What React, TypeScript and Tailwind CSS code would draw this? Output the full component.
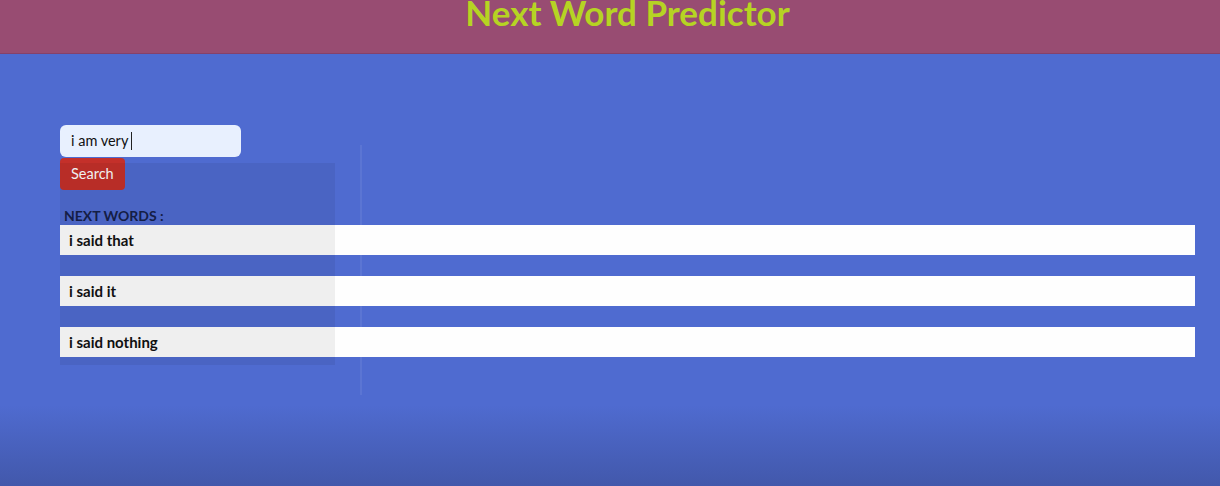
import { useState } from "react";

const predictions = ["i said that", "i said it", "i said nothing"];

export default function App() {
  const [query, setQuery] = useState("i am very");

  return (
    <div
      className="relative min-h-[486px] w-full overflow-hidden bg-[linear-gradient(to_bottom,#4f6bd0_0px,#4f6bd0_405px,#4258ab_486px)]"
      style={{ fontFamily: 'Lato, "Open Sans", sans-serif' }}
    >
      <header className="flex h-[54px] justify-center border-b border-[#85416a] bg-[#984c72] pl-[35px]">
        <h1 className="-mt-[9px] text-[35px] font-bold leading-[42px] text-[#b6d423]">
          Next Word Predictor
        </h1>
      </header>

      <main className="pl-[60px] pr-[25px] pt-[71px]">
        <form
          className="flex flex-col items-start"
          onSubmit={(event) => event.preventDefault()}
        >
          <div className="flex h-[32px] w-[181px] items-center rounded-[6px] bg-[#e8f0fe] px-[11px] text-[14.5px] text-[#111]">
            <input
              value={query}
              onChange={(event) => setQuery(event.target.value)}
              className="w-[58px] bg-transparent outline-none"
            />
            <span className="ml-[2px] h-[18px] w-px bg-[#222]" />
          </div>
          <button
            type="submit"
            className="mt-[1px] h-[32px] rounded-[4px] bg-[#c4302a] px-[11px] text-[14.5px] text-white"
          >
            Search
          </button>
        </form>

        <div className="mt-[16px] pl-[4px] text-[14px] font-bold leading-[20px] text-[#16204a]">
          NEXT WORDS :
        </div>

        <ul className="-mt-[1px] flex flex-col gap-[21px]">
          {predictions.map((word) => (
            <li
              key={word}
              className="flex h-[30px] items-center bg-[#fefefe] px-[9px] text-[15px] font-bold text-[#111]"
            >
              {word}
            </li>
          ))}
        </ul>
      </main>

      {/* faded panel left over from the screen recording */}
      <div className="pointer-events-none absolute left-[60px] top-[163px] h-[202px] w-[275px] bg-black/[0.06]" />
      <div className="pointer-events-none absolute left-[360px] top-[145px] h-[250px] w-[2px] bg-white/[0.07]" />
    </div>
  );
}
